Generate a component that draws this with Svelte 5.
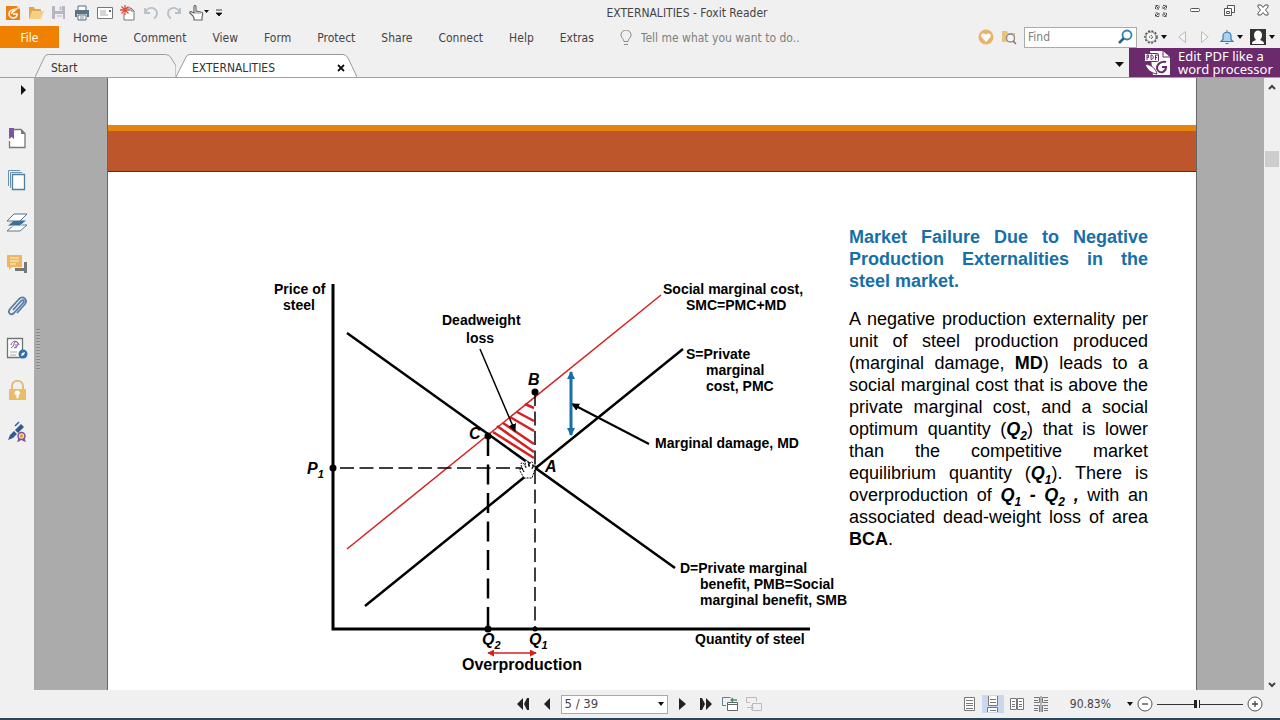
<script>
  const menus = ['Home', 'Comment', 'View', 'Form', 'Protect', 'Share', 'Connect', 'Help', 'Extras']
  const quick = ['foxit', 'open', 'save', 'print', 'mail', 'new', 'undo', 'redo']
  const panels = ['bookmarks', 'pages', 'layers', 'comments', 'attachments', 'signatures', 'security', 'certify']
  const views = ['single', 'continuous', 'facing', 'facing continuous']

  // hatching of the deadweight loss triangle: x1, y1, x2, y2
  const hatch = [
    [525, 404, 534, 408],
    [517, 412, 534, 421],
    [510, 417, 534, 431],
    [503, 423, 534, 444],
    [497, 426, 534, 452],
    [493, 432, 534, 458],
  ]

  let view = $state('continuous')
  let find = $state('')
  let tell = $state('')
  let zoom = $state(46)
</script>

{#snippet caret()}
  <svg class="caret" viewBox="0 0 6 4"><path d="M0 0h6L3 4z" fill="#111" /></svg>
{/snippet}

{#snippet quickIcon(name)}
  <svg width="16" height="16" viewBox="0 0 16 16" fill="none">
    {#if name === 'foxit'}
      <path d="M1 1h11l3 3v11H1z" fill="#f07f13" />
      <path d="M12 1v3h3z" fill="#fbd3a4" />
      <path d="M12 4C7 4 4 6 4 9c0 2 2 4 4 4 3 0 4-2 4-4H8M6.500 9c0-2 2-3 4-4" stroke="#fff" stroke-width="1.600" />
    {:else if name === 'open'}
      <path d="M1 14V2h5l1 2h6v3" fill="#dba852" />
      <path d="M1 14l3-8h12l-3 8z" fill="#f6cf85" />
    {:else if name === 'save'}
      <path d="M1 1h13v13H1z" fill="#b9b5c3" />
      <path d="M4 1h7v5H4zM4 9h8v5H4z" fill="#f0eff3" />
      <path d="M9 2h1v3H9zM6 11h5" stroke="#b9b5c3" />
    {:else if name === 'print'}
      <path d="M4 5V1h8v4M4 10h8v5H4z" fill="#fff" stroke="#5c6c77" />
      <path d="M1 5h14v7h-2v-3H3v3H1z" fill="#587486" />
      <path d="M6 12h4M6 14h4" stroke="#8195a1" />
    {:else if name === 'mail'}
      <path d="M.5 2.500h15v11H.5z" fill="#fff" stroke="#777" />
      <path d="M3 6h6M3 8h6M3 10h8" stroke="#aaa" />
      <path d="M12 5h2v2h-2z" fill="#666" />
    {:else if name === 'new'}
      <path d="M5 3h6l3 3v9H4V8" fill="#fff" stroke="#777" />
      <path d="M11 3v3h3" stroke="#777" />
      <path d="M5 0v10M0 5h10M1.500 1.500l7 7M8.500 1.500l-7 7" stroke="#dd5138" stroke-width="1.300" />
    {:else if name === 'undo'}
      <path d="M2 3v5h5M2.500 7.500C4 3 8 2 11 3.500c4 2 4 7 0 10" stroke="#b7c0c8" stroke-width="1.800" />
    {:else}
      <path d="M14 3v5H9M13.500 7.500C12 3 8 2 5 3.500c-4 2-4 7 0 10" stroke="#b7c0c8" stroke-width="1.800" />
    {/if}
  </svg>
{/snippet}

{#snippet panelIcon(name)}
  <svg width="22" height="22" viewBox="0 0 22 22" fill="none">
    {#if name === 'bookmarks'}
      <path d="M8 2.500h7l4 4v14H3.500V14" fill="#fff" stroke="#77777c" stroke-width="1.300" />
      <path d="M15 2v5h4z" fill="#77777c" />
      <path d="M3 1h5v11l-2.500-2L3 12z" fill="#7b55a1" />
    {:else if name === 'pages'}
      <path d="M2.500 17V1.500H14M4.500 19V3.500H16" stroke="#6d91ac" />
      <path d="M6.500 5.500h12v15h-12z" fill="#fff" stroke="#527f9f" stroke-width="1.300" />
    {:else if name === 'layers'}
      <path d="M1 20h13l7-6H8z" fill="#fff" stroke="#5a7990" />
      <path d="M1 15h13l7-6H8z" fill="#376f9d" stroke="#f0f0f0" />
      <path d="M1 10h13l7-7H8z" fill="#fff" stroke="#547189" />
    {:else if name === 'comments'}
      <path d="M1 2h15v12H6l-3 3v-3H1z" fill="#edb65f" />
      <path d="M4 5h9M4 8h9M4 11h6" stroke="#fff6df" />
      <path d="M18 9h3v11h-3v-2H9v-3h9z" fill="#777" />
    {:else if name === 'attachments'}
      <path d="M7 15l8-9c2-2 4 0 2 2L8 18c-3 3-7 0-4-4L13 4c4-4 9 1 6 5l-8 9" stroke="#567da4" stroke-width="1.800" />
    {:else if name === 'signatures'}
      <path d="M1.500 1.500h15v19h-15z" fill="#fff" stroke="#6c776e" stroke-width="1.300" />
      <path d="M5 11c2-1 3-3 3-4 0-3 4-3 4 0 0 2-2 4-4 4M5 8c1-5 7-5 8 0M10 7v4" stroke="#81519c" />
      <path d="M4 15h7M4 18h6" stroke="#aaa" />
      <circle cx="17" cy="17" r="4.500" fill="#316fa9" />
      <path d="M15 19l1-3 3-1-1 3z" fill="#fff" />
    {:else if name === 'security'}
      <path d="M6 10V7c0-7 11-7 11 0v3" stroke="#dfbd73" stroke-width="2" />
      <path d="M3 10h17v11H3z" fill="#e9bd67" />
      <path d="M11 12a2 2 0 0 1 1 4v3h-1v-3a2 2 0 0 1 0-4z" fill="#fff" stroke="#fff" />
    {:else}
      <path d="M2 19l2-5 4-4 3 3-4 4zM9 9l6-6 3 3-6 6z" fill="#315a91" />
      <path d="M9 5l4-4" stroke="#315a91" stroke-width="1.500" />
      <path d="M13 16l-2 5 3-1 1-2 2 2 3 1-2-5" fill="#785497" />
      <circle cx="15.500" cy="15" r="3.500" fill="#ffdc91" stroke="#785497" stroke-width="1.500" />
      <circle cx="15.500" cy="15" r="1.500" fill="#e9844f" />
    {/if}
  </svg>
{/snippet}

{#snippet viewIcon(name)}
  <svg width="16" height="16" viewBox="0 0 16 16" fill="none" stroke="#777">
    {#if name === 'single'}
      <path d="M3.500 1.500h10v13h-10z" fill="#fff" />
      <path d="M5 4.500h7M5 7.500h7M5 9.500h7M5 12.500h7" />
    {:else if name === 'continuous'}
      <path d="M3.500 0v9.500h9V0M2.500 16v-4.500h10V16M5 3.500h6M5 6.500h6M5 14.500h6" fill="#fff" />
    {:else if name === 'facing'}
      <path d="M1.500 2.500h6v11h-6zM8.500 2.500h6v11h-6z" fill="#fff" />
      <path d="M3 5.500h3M3 8.500h3M3 10.500h3M10 5.500h3M10 8.500h3M10 10.500h3" />
    {:else}
      <path d="M1 1.500h5.500v5H1M15 1.500H9.500v5H15M1 9.500h5.500V16M15 9.500H9.500V16M1 4.500h4M11 4.500h4M1 12.500h4M11 12.500h4M8 0v16M1 14.500h4M11 14.500h4" />
    {/if}
  </svg>
{/snippet}

<div class="app">
  <header class="titlebar">
    <div class="quick">
      {#each quick as name}
        <button aria-label={name}>{@render quickIcon(name)}</button>
      {/each}
      <button aria-label="hand tool">
        <svg width="20" height="16" viewBox="0 0 20 16" fill="none">
          <path d="M4 11l-3-3c-1-1 1-2 2-1l2 1V2c0-2 2-2 2 0v4l5 1c2 0 2 2 1 5v3H5v-2z" fill="#fff" stroke="#666" stroke-width="1.200" />
          <path d="M7 6v3M9 7v2M11 7v2" stroke="#888" />
          <path d="M15 5h5l-2.500 3z" fill="#111" />
        </svg>
      </button>
      <button aria-label="customise toolbar">
        <svg width="6" height="8" viewBox="0 0 6 8"><path d="M0 1h6M0 4h6L3 7z" fill="#111" stroke="#111" stroke-width=".8" /></svg>
      </button>
    </div>
    <h1>EXTERNALITIES - Foxit Reader</h1>
    <div class="window-buttons">
      <button aria-label="full screen">
        <svg width="14" height="14" viewBox="0 0 14 14" fill="none" stroke="#555">
          <path d="M1.500 1.500h3.500v3.500h-3.500zM9 1.500h3.500v3.500H9zM1.500 9h3.500v3.500h-3.500zM9 9h3.500v3.500H9z" stroke-dasharray="2.500 1" />
          <path d="M2 2l2.500 2.500M12 2L9.500 4.500M2 12l2.500-2.500M12 12L9.500 9.500" />
        </svg>
      </button>
      <button aria-label="minimise">
        <svg width="14" height="14" viewBox="0 0 14 14"><rect x="2.500" y="4.500" width="9" height="3" rx="1" fill="#fff" stroke="#555" /></svg>
      </button>
      <button aria-label="restore">
        <svg width="14" height="14" viewBox="0 0 14 14" fill="#fff" stroke="#555">
          <path d="M5.500 1.500h7v7h-7z" /><path d="M2.500 4.500h7v7h-7z" /><path d="M4.500 7.500h3v2h-3z" />
        </svg>
      </button>
      <button aria-label="close">
        <svg width="14" height="14" viewBox="0 0 14 14"><path d="M2 1h3l2 2.500L9 1h3v2L9.500 6l2.500 3v2H9L7 8.500 5 11H2V9l2.500-3L2 3z" fill="#fff" stroke="#555" /></svg>
      </button>
    </div>
  </header>

  <nav class="ribbon">
    <button class="file">File</button>
    <div class="menus">
      {#each menus as menu, i}
        <button class="menu" class:current={i === 0}>{menu}</button>
      {/each}
    </div>
    <label class="tell">
      <svg width="12" height="16" viewBox="0 0 12 16" fill="none" stroke="#888">
        <path d="M4 11.500C4 9 1 8 1 5a5 5 0 0 1 10 0c0 3-3 4-3 6.500zM4 14.500h4" />
      </svg>
      <input bind:value={tell} aria-label="Tell me" placeholder="Tell me what you want to do.." />
    </label>
    <div class="tools">
      <button aria-label="favourites">
        <svg width="16" height="16" viewBox="0 0 16 16">
          <circle cx="8" cy="8" r="7.500" fill="#e8b467" />
          <path d="M8 13L3.500 8C2 5 6 3 8 6c2-3 6-1 4.500 2z" fill="#fff" />
        </svg>
      </button>
      <button aria-label="search folder">
        <svg width="16" height="16" viewBox="0 0 16 16" fill="none">
          <path d="M1 2h5l1 2h7v9H1z" fill="#ecc078" />
          <circle cx="9.500" cy="9" r="4" fill="#f5f5f5" stroke="#888" stroke-width="1.300" />
          <path d="M12 12l3 3" stroke="#777" stroke-width="1.500" />
        </svg>
      </button>
      <div class="find">
        <input bind:value={find} aria-label="Find" placeholder="Find" />
        <button aria-label="run search">
          <svg width="16" height="16" viewBox="0 0 16 16" fill="none">
            <circle cx="10" cy="6" r="4.500" fill="#fff" stroke="#3581ae" stroke-width="1.800" />
            <path d="M7 9l-5 5" stroke="#28638e" stroke-width="2.500" />
          </svg>
        </button>
      </div>
      <button class="drop" aria-label="settings">
        <svg width="14" height="14" viewBox="0 0 14 14" fill="none" stroke="#555">
          <circle cx="7" cy="7" r="6" stroke-width="1.500" stroke-dasharray="2 1.500" />
          <circle cx="7" cy="7" r="5" fill="#f8f8f8" stroke-width=".7" />
          <circle cx="7" cy="7" r="1.500" stroke-dasharray="2 1" />
        </svg>
        {@render caret()}
      </button>
      <button class="step" aria-label="previous result">
        <svg width="8" height="14" viewBox="0 0 8 14"><path d="M7.500 1.500v11L.8 7z" fill="#f5f5f5" stroke="#bbb" /></svg>
      </button>
      <button class="step" aria-label="next result">
        <svg width="8" height="14" viewBox="0 0 8 14"><path d="M.5 1.500v11L7.200 7z" fill="#f5f5f5" stroke="#bbb" /></svg>
      </button>
      <button class="drop" aria-label="notifications">
        <svg width="14" height="14" viewBox="0 0 14 14" fill="none">
          <path d="M1 11.500l2-2V6c0-5 8-5 8 0v3.500l2 2z" fill="#a9d2ef" stroke="#3d7db0" stroke-width="1.200" />
          <path d="M5.500 13.500h3M7 0v2" stroke="#3d7db0" />
        </svg>
        {@render caret()}
      </button>
      <button class="drop" aria-label="account">
        <svg width="16" height="16" viewBox="0 0 16 16">
          <path d="M0 0h16v16H0z" fill="#333" />
          <path d="M4 6c0-6 8-6 8 0 0 2-1 4-2 5 2 1 4 1 4 4H2c0-3 2-3 4-4-1-1-2-3-2-5z" fill="#fff" />
        </svg>
        {@render caret()}
      </button>
    </div>
  </nav>

  <div class="tabbar">
    <div class="tab">
      <svg class="shape" viewBox="0 0 148 23" preserveAspectRatio="none"><path d="M0 23L10 3Q11 .5 14 .5H137Q141 .5 143 4L148 12V23" fill="#f1f1f1" stroke="#999" /></svg>
      <button class="tab-name">Start</button>
    </div>
    <div class="tab active">
      <svg class="shape" viewBox="0 0 181 23" preserveAspectRatio="none"><path d="M0 23L10 3Q11 .5 14 .5H167Q170 .5 172 4L181 23" fill="#fff" stroke="#999" /></svg>
      <button class="tab-name">EXTERNALITIES</button>
      <button class="tab-close" aria-label="close tab">
        <svg width="8" height="8" viewBox="0 0 8 8"><path d="M1 1l6 6M7 1L1 7" stroke="#111" stroke-width="1.800" /></svg>
      </button>
    </div>
    <button class="tab-list" aria-label="tab list">
      <svg width="9" height="5" viewBox="0 0 9 5"><path d="M0 0h9L4.500 5z" fill="#111" /></svg>
    </button>
    <a class="promo" href="#editor">
      <svg width="27" height="26" viewBox="0 0 27 26" fill="none">
        <path d="M6 1h13l7 6v18H9z" fill="#fff" />
        <path d="M19 1v6h7" stroke="#6b2a6c" />
        <rect x=".5" y="3.500" width="14" height="8" rx="1" fill="#fff" stroke="#6b2a6c" />
        <path d="M3 10V5h1.500v2.500H3M7 5v4.500c3 0 3-4.500 0-4.500M11.500 10V5H14M11.500 7.500H13" stroke="#6b2a6c" />
        <path d="M1 14c2 6 6 9 12 10-1-5-5-9-12-10z" fill="#fff" stroke="#6b2a6c" />
        <path d="M22 12c-5-1-9 2-9 6 0 3 3 5 6 4 2-1 3-3 3-5h-4" stroke="#6b2a6c" stroke-width="2" />
      </svg>
      <span>Edit PDF like a<br />word processor</span>
    </a>
  </div>

  <div class="workspace">
    <aside>
      <button class="expand" aria-label="expand panel">
        <svg width="5" height="10" viewBox="0 0 5 10"><path d="M0 0v10l5-5z" fill="#111" /></svg>
      </button>
      {#each panels as name}
        <button aria-label={name}>{@render panelIcon(name)}</button>
      {/each}
    </aside>

    <main>
      <div class="grip"></div>
      <article class="page">
        <div class="band"></div>
        <div class="slide">
          <svg class="chart" viewBox="260 270 589 420">
            <defs>
              <marker id="black" viewBox="0 0 8 8" refX="7" refY="4" markerWidth="8" markerHeight="8" markerUnits="userSpaceOnUse" orient="auto"><path d="M0 0l8 4-8 4z" /></marker>
              <marker id="blue" viewBox="0 0 8 8" refX="7" refY="4" markerWidth="8" markerHeight="8" markerUnits="userSpaceOnUse" orient="auto-start-reverse"><path d="M0 0l8 4-8 4z" fill="#176fa9" /></marker>
              <marker id="red" viewBox="0 0 8 8" refX="7" refY="4" markerWidth="7" markerHeight="7" markerUnits="userSpaceOnUse" orient="auto-start-reverse"><path d="M0 0l8 4-8 4z" fill="#d4201f" /></marker>
            </defs>

            <!-- axes -->
            <path class="axis" d="M333 284V629H810" />

            <!-- curves -->
            <path class="curve" d="M347 333L675 568M365 606L683 349" />
            <path class="smc" d="M347 549L661 295" />

            <!-- projections to the axes -->
            <path class="dash thin" d="M340 468H535M535 392V629" />
            <path class="dash thick" d="M488 436V629" />

            {#each hatch as [x1, y1, x2, y2]}
              <line class="hatch" {x1} {y1} {x2} {y2} />
            {/each}

            <path class="pointer" d="M480 349L515 431" marker-end="url(#black)" />
            <path class="pointer wide" d="M649 444L572 404" marker-end="url(#black)" />
            <path class="damage" d="M571 372V435" marker-start="url(#blue)" marker-end="url(#blue)" />
            <path class="over" d="M488 653H536" marker-start="url(#red)" marker-end="url(#red)" />

            <circle cx="333" cy="468" r="3.500" />
            <circle cx="535" cy="392" r="3.500" />
            <circle cx="488" cy="436" r="3.500" />
            <circle cx="535" cy="468" r="2.500" />
            <circle cx="488" cy="629" r="3.500" />
            <circle cx="535" cy="629" r="2.500" />

            <text x="274" y="294">Price of</text>
            <text x="283" y="310">steel</text>
            <text x="442" y="325">Deadweight</text>
            <text x="466" y="343">loss</text>
            <text x="663" y="294">Social marginal cost,</text>
            <text x="686" y="310">SMC=PMC+MD</text>
            <text x="686" y="359">S=Private</text>
            <text x="706" y="375">marginal</text>
            <text x="706" y="391">cost, PMC</text>
            <text x="655" y="448">Marginal damage, MD</text>
            <text x="680" y="573">D=Private marginal</text>
            <text x="700" y="589">benefit, PMB=Social</text>
            <text x="700" y="605">marginal benefit, SMB</text>
            <text x="695" y="644">Quantity of steel</text>
            <text class="large" x="462" y="670">Overproduction</text>
            <text class="point" x="528" y="385">B</text>
            <text class="point" x="469" y="439">C</text>
            <text class="point" x="545" y="472">A</text>
            <text class="point" x="307" y="474">P<tspan class="index" dy="4">1</tspan></text>
            <text class="point" x="482" y="645">Q<tspan class="index" dy="4">2</tspan></text>
            <text class="point" x="529" y="645">Q<tspan class="index" dy="4">1</tspan></text>

            <!-- hand cursor -->
            <path class="hand" d="M524 478l-4-7c-1-2 1-3 3-1l1 2-3-7c-1-2 2-3 3-1l2 4-1-6c0-2 3-2 3 0l1 5 1-4c1-2 3-1 3 1l-1 5 1-2c1-1 3 0 2 2l-3 9z" />
          </svg>

          <section>
            <h2>Market Failure Due to Negative Production Externalities in the steel market.</h2>
            <p>
              A negative production externality per unit of steel production produced (marginal damage, <b>MD</b>)
              leads to a social marginal cost that is above the private marginal cost, and a social optimum quantity
              (<em>Q<sub>2</sub></em>) that is lower than the competitive market equilibrium quantity
              (<em>Q<sub>1</sub></em>). There is overproduction of <em>Q<sub>1</sub> - Q<sub>2</sub> ,</em>
              with an associated dead-weight loss of area <b>BCA</b>.
            </p>
          </section>
        </div>
      </article>
    </main>

    <div class="scrollbar">
      <svg width="8" height="6" viewBox="0 0 8 6"><path d="M1 5l3-3 3 3" fill="none" stroke="#444" stroke-width="2" /></svg>
      <div class="thumb"></div>
      <svg width="8" height="6" viewBox="0 0 8 6"><path d="M1 1l3 3 3-3" fill="none" stroke="#444" stroke-width="2" /></svg>
    </div>
  </div>

  <footer>
    <div class="pager">
      <button aria-label="first page"><svg width="14" height="12" viewBox="0 0 14 12"><path d="M7 0v12L1 6zM13 0v12h-2L8 6l3-6z" fill="#222" /></svg></button>
      <button aria-label="previous page"><svg width="14" height="12" viewBox="0 0 14 12"><path d="M10 0v12L4 6z" fill="#222" /></svg></button>
      <div class="page-select">
        <select aria-label="page"><option>5 / 39</option></select>
        {@render caret()}
      </div>
      <button aria-label="next page"><svg width="14" height="12" viewBox="0 0 14 12"><path d="M4 0v12l7-6z" fill="#222" /></svg></button>
      <button aria-label="last page"><svg width="14" height="12" viewBox="0 0 14 12"><path d="M7 0v12l6-6zM1 0v12h2l3-6-3-6z" fill="#222" /></svg></button>
      <button aria-label="previous view">
        <svg width="16" height="16" viewBox="0 0 16 16" fill="none">
          <path d="M4 9.500H.5v-8h8" stroke="#56849a" />
          <path d="M5.500 6.500h10v8h-10zM5 8.500h10" fill="#fff" stroke="#666" />
          <path d="M15 4H9m2-2L9 4l2 2" stroke="#3f9078" stroke-width="1.300" />
        </svg>
      </button>
      <button aria-label="next view">
        <svg width="16" height="16" viewBox="0 0 16 16" fill="none" stroke="#bbb">
          <path d="M4 6.500H.5v-5h10v4M6.500 7.500h9v7h-9zM1 11.500h6M5 9l2 2.500L5 14" />
        </svg>
      </button>
    </div>
    <div class="viewing">
      <div class="views">
        {#each views as name}
          <button aria-label={name} class:on={view === name} onclick={() => (view = name)}>{@render viewIcon(name)}</button>
        {/each}
      </div>
      <button class="percent">90.83% {@render caret()}</button>
      <button aria-label="zoom out"><svg width="16" height="16" viewBox="0 0 16 16"><circle cx="8" cy="8" r="7" fill="#fff" stroke="#555" /><path d="M5 8h6" stroke="#444" stroke-width="1.300" /></svg></button>
      <input type="range" min="0" max="100" bind:value={zoom} aria-label="zoom" />
      <button aria-label="zoom in"><svg width="16" height="16" viewBox="0 0 16 16"><circle cx="8" cy="8" r="7" fill="#fff" stroke="#555" /><path d="M5 8h6M8 5v6" stroke="#444" stroke-width="1.300" /></svg></button>
    </div>
  </footer>
</div>

<style>
  :global(body) {
    margin: 0;
  }

  .app {
    display: flex;
    flex-direction: column;
    height: 100vh;
    overflow: hidden;
    background: #f0f0f0;
    color: #444;
    font: 12px/16px 'DejaVu Sans Condensed', 'Noto Sans', sans-serif;
  }

  button,
  input,
  select {
    margin: 0;
    padding: 0;
    border: 0;
    background: none;
    color: inherit;
    font: inherit;
  }

  button {
    display: flex;
    align-items: center;
    justify-content: center;
  }

  svg {
    display: block;
    flex: none;
  }

  .caret {
    width: 6px;
    height: 4px;
  }

  /* title bar */
  .titlebar {
    display: grid;
    grid-template-columns: 220px 1fr 126px;
    align-items: center;
    flex: none;
    height: 26px;
  }

  .quick {
    display: flex;
    align-items: center;
    gap: 7px;
    padding-left: 5px;
  }

  h1 {
    margin: 0;
    font-size: 12px;
    font-weight: 400;
    text-align: center;
  }

  .window-buttons {
    display: flex;
    gap: 20px;
    padding-bottom: 4px;
  }

  /* ribbon */
  .ribbon {
    display: flex;
    align-items: center;
    flex: none;
    height: 22px;
  }

  .file {
    width: 59px;
    height: 22px;
    padding-top: 2px;
    background: #f08000;
    color: #fff;
  }

  .menus {
    display: flex;
    align-items: center;
    gap: 26px;
    padding: 2px 0 0 14px;
  }

  .menu.current {
    font-size: 13px;
  }

  .tell {
    display: flex;
    align-items: center;
    flex: 1;
    gap: 9px;
    padding: 2px 0 0 26px;
  }

  .tell input {
    flex: 1;
    min-width: 0;
  }

  input::placeholder {
    color: #808080;
    opacity: 1;
  }

  .tools {
    display: flex;
    align-items: center;
    gap: 7px;
    padding-right: 5px;
  }

  .find {
    display: flex;
    align-items: center;
    box-sizing: border-box;
    width: 113px;
    height: 21px;
    padding: 0 3px;
    border: 1px solid #aaa;
    background: #fff;
  }

  .find input {
    flex: 1;
    min-width: 0;
  }

  .drop {
    gap: 3px;
  }

  .step {
    width: 16px;
  }

  /* document tabs */
  .tabbar {
    display: flex;
    align-items: flex-end;
    flex: none;
    height: 29px;
    border-bottom: 1px solid #a0a0a0;
  }

  .tab {
    position: relative;
    display: flex;
    align-items: center;
    box-sizing: border-box;
    width: 141px;
    height: 23px;
    margin-left: 35px;
    padding: 5px 12px 0 16px;
    color: #333;
  }

  .tab.active {
    width: 181px;
    margin-left: 0;
  }

  .shape {
    position: absolute;
    inset: 0;
    width: 100%;
    height: 100%;
  }

  .tab-name {
    position: relative;
  }

  .tab-close {
    position: relative;
    margin-left: auto;
  }

  .tab-list {
    height: 26px;
    margin-left: auto;
    padding: 0 5px;
  }

  .promo {
    display: flex;
    align-items: center;
    gap: 7px;
    box-sizing: border-box;
    width: 151px;
    height: 29px;
    padding-left: 15px;
    background: #6b2a6c;
    color: #fff;
    font: 13px/13px 'Noto Sans', sans-serif;
    text-decoration: none;
    white-space: nowrap;
  }

  /* workspace */
  .workspace {
    display: flex;
    flex: 1;
    min-height: 0;
  }

  aside {
    display: flex;
    flex-direction: column;
    align-items: center;
    gap: 20px;
    flex: none;
    width: 34px;
  }

  .expand {
    align-self: flex-end;
    height: 24px;
    margin-bottom: 5px;
    padding-right: 8px;
  }

  main {
    display: flex;
    flex: 1;
    min-width: 0;
    overflow: hidden;
    background: #ababab;
  }

  .grip {
    flex: none;
    width: 4px;
    height: 41px;
    margin: 251px 67px 0 2px;
    background: repeating-linear-gradient(#888 0 1px, #b4b4b4 1px 3px);
  }

  .page {
    flex: 1;
    min-width: 0;
    margin-right: 67px;
    padding-top: 47px;
    border: solid #666;
    border-width: 0 1px;
    background: #fff;
    color: #000;
    font-family: 'Liberation Sans', Arial, sans-serif;
  }

  .band {
    height: 40px;
    border-top: 6px solid #e5850f;
    border-bottom: 1px solid #54301c;
    background: #bd572b;
  }

  .slide {
    display: flex;
    align-items: flex-start;
    padding: 54px 48px 0 152px;
  }

  .chart {
    flex: 1;
    min-width: 0;
    margin-top: 44px;
  }

  .axis,
  .curve,
  .smc,
  .dash,
  .pointer,
  .damage,
  .over {
    fill: none;
    stroke: #000;
  }

  .axis {
    stroke-width: 3;
  }

  .curve {
    stroke-width: 2.5;
  }

  .smc {
    stroke: #d4201f;
    stroke-width: 1.5;
  }

  .thin {
    stroke-width: 1.5;
    stroke-dasharray: 14 5.5;
  }

  .thick {
    stroke-width: 2.5;
    stroke-dasharray: 20 8.5;
  }

  .hatch {
    stroke: #d4201f;
    stroke-width: 2.5;
  }

  .pointer {
    stroke-width: 1.5;
  }

  .pointer.wide {
    stroke-width: 2;
  }

  .damage {
    stroke: #176fa9;
    stroke-width: 3;
  }

  .over {
    stroke: #d4201f;
    stroke-width: 1.5;
  }

  .hand {
    fill: #fff;
    stroke: #000;
    stroke-width: 1;
    stroke-dasharray: 2 1;
  }

  .chart text {
    font-size: 14px;
    font-weight: 700;
  }

  .chart .large {
    font-size: 16px;
  }

  .chart .point {
    font-size: 16px;
    font-style: italic;
  }

  .index {
    font-size: 11px;
  }

  section {
    flex: none;
    width: 299px;
    font-size: 18px;
    line-height: 22px;
    text-align: justify;
  }

  h2 {
    margin: 0 0 16px;
    color: #176fa9;
    font-size: 18px;
    line-height: 22px;
  }

  p {
    margin: 0;
  }

  em {
    font-weight: 700;
  }

  sub {
    font-size: 12px;
    line-height: 0;
  }

  .scrollbar {
    display: flex;
    flex-direction: column;
    align-items: center;
    flex: none;
    width: 16px;
    padding: 6px 0 2px;
  }

  .thumb {
    width: 14px;
    height: 16px;
    margin: 61px 0 auto;
    background: #cdcdcd;
  }

  /* status bar */
  footer {
    display: grid;
    grid-template-columns: 1fr auto 1fr;
    align-items: center;
    flex: none;
    height: 28px;
    border-bottom: 2px solid #29465a;
  }

  .pager {
    grid-column: 2;
    display: flex;
    align-items: center;
    gap: 4px;
    padding-right: 4px;
  }

  .pager button {
    width: 20px;
  }

  .page-select {
    display: flex;
    align-items: center;
    box-sizing: border-box;
    width: 107px;
    height: 19px;
    padding: 0 3px;
    border: 1px solid #aaa;
    background: #fff;
  }

  select {
    flex: 1;
    appearance: none;
    font-size: 13px;
  }

  .viewing {
    display: flex;
    align-items: center;
    justify-self: end;
    gap: 4px;
    padding-right: 17px;
  }

  .views {
    display: flex;
    gap: 2px;
    margin-right: 14px;
  }

  .views button {
    width: 22px;
    height: 18px;
  }

  .views .on {
    background: #c9d8ec;
  }

  .percent {
    gap: 16px;
  }

  input[type='range'] {
    appearance: none;
    width: 86px;
    height: 16px;
    background: linear-gradient(#333, #333) center / 100% 1px no-repeat;
  }

  input[type='range']::-webkit-slider-thumb {
    appearance: none;
    width: 6px;
    height: 8px;
    background: linear-gradient(90deg, #222 0 3px, #f0f0f0 3px 5px, #222 5px);
  }
</style>
